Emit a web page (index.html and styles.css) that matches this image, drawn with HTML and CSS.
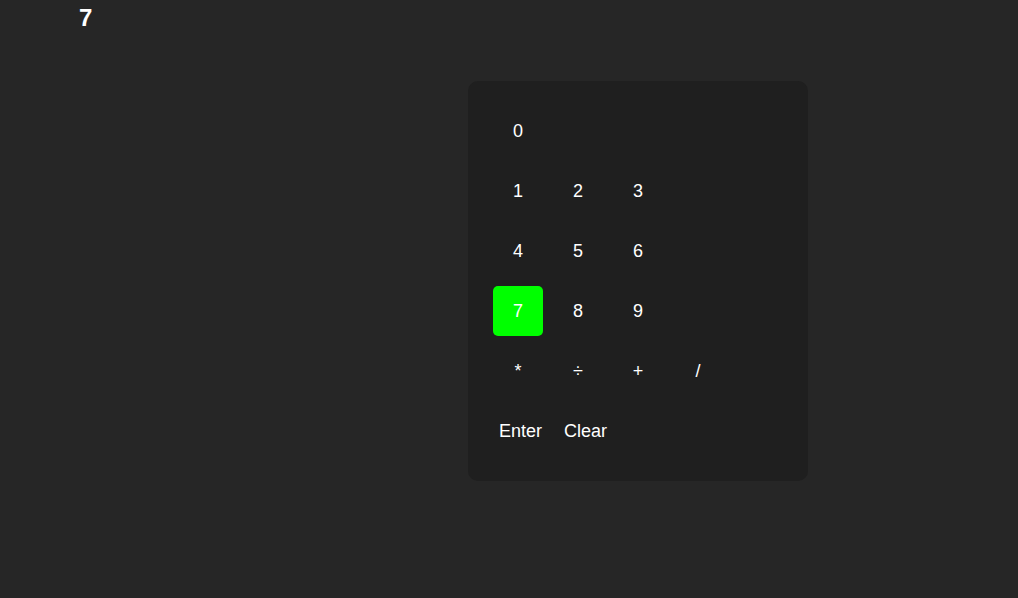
FILE: index.html
```html
<!DOCTYPE html>
<html>
<head>
<meta charset="utf-8">
<link rel="stylesheet" href="styles.css">
</head>
<body>
<div class="display">7</div>
<div class="pad">
  <div class="row"><button class="key">0</button></div>
  <div class="row"><button class="key">1</button><button class="key">2</button><button class="key">3</button></div>
  <div class="row"><button class="key">4</button><button class="key">5</button><button class="key">6</button></div>
  <div class="row"><button class="key active">7</button><button class="key">8</button><button class="key">9</button></div>
  <div class="row"><button class="key">*</button><button class="key">÷</button><button class="key">+</button><button class="key">/</button></div>
  <div class="row"><button class="key wide">Enter</button><button class="key wide">Clear</button></div>
</div>
</body>
</html>
```
FILE: styles.css
```css
html, body {
  margin: 0;
  padding: 0;
  background: #262626;
  font-family: "Liberation Sans", Arial, sans-serif;
  color: #fff;
}
.display {
  padding: 4px 0 0 79px;
  height: 27px;
  font-size: 24px;
  font-weight: bold;
  line-height: 27px;
}
.pad {
  margin: 50px 0 0 468px;
  width: 290px;
  height: 350px;
  padding: 25px;
  background: #1f1f1f;
  border-radius: 10px;
  display: flex;
  flex-direction: column;
  gap: 10px;
}
.row {
  display: flex;
  gap: 10px;
}
.key {
  min-width: 50px;
  height: 50px;
  padding: 0 6px;
  border: none;
  border-radius: 5px;
  background: transparent;
  color: #fff;
  font-family: "Liberation Sans", Arial, sans-serif;
  font-size: 18px;
}
.key.active {
  background: #00ff00;
}
```
